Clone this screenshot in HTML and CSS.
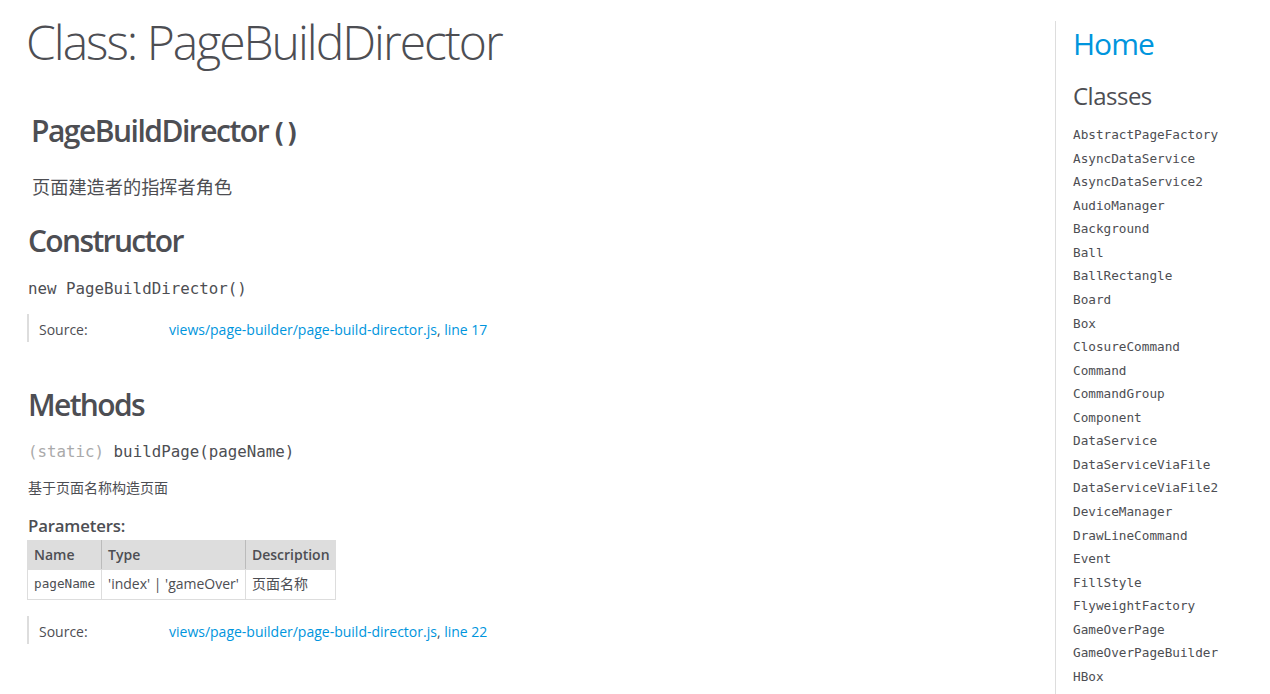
FILE: index.html
```html
<!DOCTYPE html>
<html lang="zh">
<head>
<meta charset="utf-8">
<title>PageBuildDirector</title>
<link rel="stylesheet" href="styles.css">
</head>
<body>
<div class="page">
  <main class="main">
    <h1 class="page-title">Class: PageBuildDirector</h1>
    <div class="overview">
      <h2 class="class-name">PageBuildDirector<span class="signature">()</span></h2>
      <div class="class-description">页面建造者的指挥者角色</div>
    </div>
    <h2 class="section-title">Constructor</h2>
    <h4 class="name">new PageBuildDirector()</h4>
    <dl class="details">
      <dt>Source:</dt>
      <dd><a href="#">views/page-builder/page-build-director.js</a>, <a href="#">line 17</a></dd>
    </dl>
    <h2 class="section-title methods">Methods</h2>
    <h4 class="name method"><span class="type-signature">(static) </span>buildPage(pageName)</h4>
    <div class="description">基于页面名称构造页面</div>
    <h5 class="params-title">Parameters:</h5>
    <table class="params">
      <thead>
        <tr><th>Name</th><th>Type</th><th class="last">Description</th></tr>
      </thead>
      <tbody>
        <tr><td class="pname">pageName</td><td>'index' | 'gameOver'</td><td>页面名称</td></tr>
      </tbody>
    </table>
    <dl class="details details-2">
      <dt>Source:</dt>
      <dd><a href="#">views/page-builder/page-build-director.js</a>, <a href="#">line 22</a></dd>
    </dl>
  </main>
  <nav class="nav">
    <h2 class="home"><a href="#">Home</a></h2>
    <h3 class="classes-title">Classes</h3>
    <ul class="class-list">
      <li><a href="#">AbstractPageFactory</a></li>
      <li><a href="#">AsyncDataService</a></li>
      <li><a href="#">AsyncDataService2</a></li>
      <li><a href="#">AudioManager</a></li>
      <li><a href="#">Background</a></li>
      <li><a href="#">Ball</a></li>
      <li><a href="#">BallRectangle</a></li>
      <li><a href="#">Board</a></li>
      <li><a href="#">Box</a></li>
      <li><a href="#">ClosureCommand</a></li>
      <li><a href="#">Command</a></li>
      <li><a href="#">CommandGroup</a></li>
      <li><a href="#">Component</a></li>
      <li><a href="#">DataService</a></li>
      <li><a href="#">DataServiceViaFile</a></li>
      <li><a href="#">DataServiceViaFile2</a></li>
      <li><a href="#">DeviceManager</a></li>
      <li><a href="#">DrawLineCommand</a></li>
      <li><a href="#">Event</a></li>
      <li><a href="#">FillStyle</a></li>
      <li><a href="#">FlyweightFactory</a></li>
      <li><a href="#">GameOverPage</a></li>
      <li><a href="#">GameOverPageBuilder</a></li>
      <li><a href="#">HBox</a></li>
    </ul>
  </nav>
</div>
</body>
</html>
```
FILE: styles.css
```css
* { box-sizing: border-box; }
html, body { margin: 0; padding: 0; overflow: hidden; }
body {
  font-family: "Open Sans", "Noto Sans CJK SC", sans-serif;
  font-size: 14px;
  line-height: 20px;
  color: #4d4e53;
  background: #fff;
}
a { color: #0095dd; text-decoration: none; }

.page {
  display: flex;
  min-height: 694px;
}
.main {
  flex: 1;
  padding: 10px 0 0 28px;
}
.page-title {
  font-size: 48px;
  font-weight: 300;
  letter-spacing: -2px;
  line-height: 64px;
  margin: 0;
  margin-left: -2px;
}
.overview { padding-left: 3px; }
.class-name {
  font-size: 30px;
  font-weight: 600;
  letter-spacing: -1.5px;
  line-height: 36px;
  height: 36px;
  margin: 39px 0 0;
}
.class-name .signature {
  font-family: "DejaVu Sans Mono", monospace;
  font-size: 26px;
  font-weight: 700;
  letter-spacing: -2px;
  line-height: 0;
  margin-left: 3px;
}
.class-description {
  font-size: 18.2px;
  line-height: 26px;
  margin-top: 25px;
  padding-left: 1px;
}
.section-title {
  font-size: 30px;
  font-weight: 600;
  letter-spacing: -1.65px;
  line-height: 36px;
  margin: 23px 0 0;
}
.section-title.methods { margin-top: 45px; }
.name {
  font-family: "DejaVu Sans Mono", monospace;
  font-size: 15.8px;
  font-weight: 400;
  letter-spacing: 0;
  line-height: 24px;
  margin: 18px 0 0;
}
.name.method { margin-top: 17px; }
.type-signature { color: #aaa; }
.details {
  display: flex;
  margin: 13px 0 0;
  padding: 6px 0 2px;
  border-left: 2px solid #ddd;
  margin-left: -1px;
}
.details dt {
  width: 140px;
  padding-left: 10px;
}
.details dd { margin: 0; }
.details-2 { margin-top: 16px; }
.description {
  margin-top: 13.5px;
}
.params-title {
  font-size: 16.8px;
  font-weight: 600;
  letter-spacing: -0.17px;
  line-height: 20px;
  margin: 18px 0 0;
}
.params {
  border-collapse: collapse;
  border-spacing: 0;
  margin-top: 4px;
  margin-left: -1px;
}
.params th, .params td {
  border: 1px solid #ddd;
  padding: 4px 6px;
  text-align: left;
  vertical-align: top;
  line-height: 20.5px;
}
.params thead tr { background: #ddd; }
.params th { font-weight: 600; border-right: 1px solid #bbb; }
.params th.last { border-right: 1px solid #ddd; padding-right: 5px; }
.params .pname {
  font-family: "DejaVu Sans Mono", monospace;
  font-size: 12.7px;
}

.nav {
  width: 215px;
  margin-top: 21px;
  border-left: 1px solid #ddd;
  padding-left: 17px;
}
.home {
  font-size: 30px;
  font-weight: 400;
  letter-spacing: -1px;
  line-height: 36px;
  margin: 5px 0 0;
}
.classes-title {
  font-size: 24px;
  font-weight: 400;
  letter-spacing: -0.5px;
  line-height: 30px;
  margin: 19px 0 0;
}
.class-list {
  list-style: none;
  margin: 15px 0 0;
  padding: 0;
  font-family: "DejaVu Sans Mono", monospace;
  font-size: 12.7px;
}
.class-list li {
  margin-top: 6px;
  line-height: 17.57px;
  height: 17.57px;
}
.class-list li:first-child { margin-top: 0; }
.class-list a {
  color: #4d4e53;
}
```
